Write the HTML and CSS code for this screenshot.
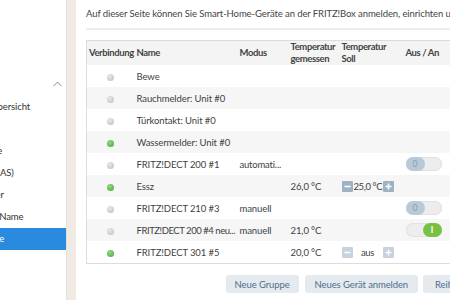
FILE: index.html
```html
<!DOCTYPE html>
<html lang="de">
<head>
<meta charset="utf-8">
<title>Smart Home</title>
<link rel="stylesheet" href="styles.css">
</head>
<body>
<div class="page">
  <nav class="sidebar">
    <div class="nav-inner">
      <div class="nav-head">
        <span class="nav-title">Heimnetz</span>
        <svg class="chev" width="9" height="6" viewBox="0 0 9 6"><path d="M0.5 5.2 L4.5 1 L8.5 5.2" fill="none" stroke="#8a8a8a" stroke-width="1"/></svg>
      </div>
      <div class="nav-item">Heimnetzübersicht</div>
      <div class="nav-item">Netzwerk</div>
      <div class="nav-item">USB-Geräte</div>
      <div class="nav-item">Speicher (NAS)</div>
      <div class="nav-item">Mediaserver</div>
      <div class="nav-item">FRITZ!Box-Name</div>
      <div class="nav-item active">Smart Home</div>
    </div>
  </nav>
  <div class="divider"></div>
  <main class="main">
    <div class="main-inner">
      <p class="intro">Auf dieser Seite können Sie Smart-Home-Geräte an der FRITZ!Box anmelden, einrichten und steuern.</p>
      <div class="sep"></div>
      <table class="devices">
        <colgroup>
          <col class="c-con"><col class="c-name"><col class="c-mode"><col class="c-tm"><col class="c-ts"><col class="c-sw">
        </colgroup>
        <thead>
          <tr>
            <th>Verbindung</th>
            <th>Name</th>
            <th>Modus</th>
            <th>Temperatur<br>gemessen</th>
            <th>Temperatur<br>Soll</th>
            <th class="sw-head">Aus / An</th>
          </tr>
        </thead>
        <tbody>
          <tr><td><span class="dot"></span></td><td>Bewe</td><td></td><td></td><td></td><td></td></tr>
          <tr><td><span class="dot"></span></td><td>Rauchmelder: Unit #0</td><td></td><td></td><td></td><td></td></tr>
          <tr><td><span class="dot"></span></td><td>Türkontakt: Unit #0</td><td></td><td></td><td></td><td></td></tr>
          <tr><td><span class="dot on"></span></td><td>Wassermelder: Unit #0</td><td></td><td></td><td></td><td></td></tr>
          <tr><td><span class="dot"></span></td><td>FRITZ!DECT 200 #1</td><td class="clip">automati...</td><td></td><td></td>
            <td><span class="toggle"><span class="knob">0</span></span></td></tr>
          <tr><td><span class="dot on"></span></td><td>Essz</td><td></td><td>26,0 °C</td>
            <td><span class="stepper"><span class="step"><svg width="11" height="11" viewBox="0 0 11 11"><path d="M2.5 5.5 H8.5" stroke="#fff" stroke-width="1.6"/></svg></span><span class="val">25,0 °C</span><span class="step"><svg width="11" height="11" viewBox="0 0 11 11"><path d="M2.5 5.5 H8.5 M5.5 2.5 V8.5" stroke="#fff" stroke-width="1.6"/></svg></span></span></td><td></td></tr>
          <tr><td><span class="dot"></span></td><td>FRITZ!DECT 210 #3</td><td>manuell</td><td></td><td></td>
            <td><span class="toggle"><span class="knob">0</span></span></td></tr>
          <tr><td><span class="dot"></span></td><td class="clip tight">FRITZ!DECT 200 #4 neu...</td><td>manuell</td><td>21,0 °C</td><td></td>
            <td><span class="toggle is-on"><span class="knob">I</span></span></td></tr>
          <tr><td><span class="dot on"></span></td><td>FRITZ!DECT 301 #5</td><td></td><td>20,0 °C</td>
            <td><span class="stepper off"><span class="step"><svg width="11" height="11" viewBox="0 0 11 11"><path d="M2.5 5.5 H8.5" stroke="#fff" stroke-width="1.6"/></svg></span><span class="val">aus</span><span class="step"><svg width="11" height="11" viewBox="0 0 11 11"><path d="M2.5 5.5 H8.5 M5.5 2.5 V8.5" stroke="#fff" stroke-width="1.6"/></svg></span></span></td><td></td></tr>
        </tbody>
      </table>
      <div class="actions">
        <button class="btn btn-group">Neue Gruppe</button>
        <button class="btn btn-new">Neues Gerät anmelden</button>
        <button class="btn">Reihenfolge ändern</button>
      </div>
    </div>
  </main>
</div>
</body>
</html>
```
FILE: styles.css
```css
html, body {
  margin: 0;
  padding: 0;
  background: #fff;
}
body {
  font-family: "Lato", "Open Sans", sans-serif;
  font-size: 9.5px;
  letter-spacing: -0.1px;
  color: #3f3f3f;
}
.page {
  display: flex;
  width: 450px;
  height: 300px;
  overflow: hidden;
}
.sidebar {
  width: 66px;
  flex: none;
  overflow: hidden;
  padding-top: 74px;
  background: #fff;
}
.nav-inner {
  width: 113px;
  margin-left: -47px;
}
.nav-head {
  height: 22px;
  display: flex;
  align-items: center;
  justify-content: space-between;
  padding-right: 4px;
}
.nav-head .chev {
  margin-top: -3px;
}
.nav-title {
  color: #333;
}
.nav-item {
  height: 22px;
  line-height: 22px;
  white-space: nowrap;
  color: #333;
}
.nav-item.active {
  background: #2a8ade;
  color: #fff;
}
.divider {
  width: 10px;
  flex: none;
  background: #efebe4;
  border-left: 1px solid #e6e1d8;
  box-sizing: border-box;
}
.main {
  flex: 1;
  min-width: 0;
  overflow: hidden;
  padding-left: 10px;
}
.main-inner {
  width: 440px;
}
.intro {
  margin: 0;
  padding-top: 7px;
  line-height: 13px;
  white-space: nowrap;
  color: #444;
}
.sep {
  height: 2px;
  background: #ececec;
  margin: 8px 0 10px;
}
.devices {
  width: 100%;
  table-layout: fixed;
  border-collapse: collapse;
  border: 1px solid #dcdcdc;
}
.c-con { width: 48px; }
.c-name { width: 103px; }
.c-mode { width: 51px; }
.c-tm { width: 51px; }
.c-ts { width: 64px; }
.devices th {
  background: #f4f4f4;
  height: 24px;
  padding: 0 2px;
  text-align: left;
  font-weight: bold;
  letter-spacing: -0.4px;
  line-height: 12px;
  color: #444;
  vertical-align: middle;
  white-space: nowrap;
}
.devices td {
  height: 22px;
  padding: 0 2px;
  white-space: nowrap;
  vertical-align: middle;
}
.devices td:first-child {
  text-align: center;
}
.devices tbody tr:nth-child(even) {
  background: #f6f6f6;
}
.clip {
  overflow: hidden;
  letter-spacing: -0.2px;
}
.clip.tight {
  letter-spacing: -0.45px;
}
.dot {
  display: inline-block;
  width: 7px;
  height: 7px;
  border-radius: 50%;
  background: radial-gradient(circle at 40% 35%, #e8e8e8, #bcbcbc);
  vertical-align: middle;
}
.dot.on {
  background: radial-gradient(circle at 40% 35%, #93da7e, #3ea63a);
}
.toggle {
  display: flex;
  width: 36px;
  height: 14px;
  border-radius: 7px;
  background: #ededed;
  box-shadow: inset 0 0 0 1px #e2e2e2;
}
.toggle.is-on {
  justify-content: flex-end;
}
.knob {
  width: 19px;
  height: 14px;
  border-radius: 7px;
  background: #b9c9d7;
  color: #879fb4;
  font-size: 8.5px;
  line-height: 14px;
  text-align: center;
}
.is-on .knob {
  background: #79c143;
  color: #fff;
  font-weight: bold;
}
.stepper {
  display: flex;
  align-items: center;
}
.step {
  display: flex;
  flex: none;
  width: 11px;
  height: 11px;
  background: #9fb2c3;
  border-radius: 1px;
}
.stepper.off .step {
  background: #c7d2dc;
}
.val {
  flex: none;
  width: 28px;
  margin: 0 1px;
  text-align: center;
  letter-spacing: -0.4px;
}
.actions {
  display: flex;
  justify-content: flex-end;
  gap: 5px;
  margin-top: 11px;
}
.btn {
  height: 18px;
  padding: 0 12px;
  border: 0;
  border-radius: 3px;
  background: #e5eaef;
  color: #4f6e8c;
  font-family: "Lato", "Open Sans", sans-serif;
  font-size: 9.5px;
  letter-spacing: -0.1px;
  white-space: nowrap;
  flex: none;
}
.btn-group {
  padding: 0 9px;
  margin-right: 1px;
}
.btn-new {
  padding: 0 10px;
}
```
